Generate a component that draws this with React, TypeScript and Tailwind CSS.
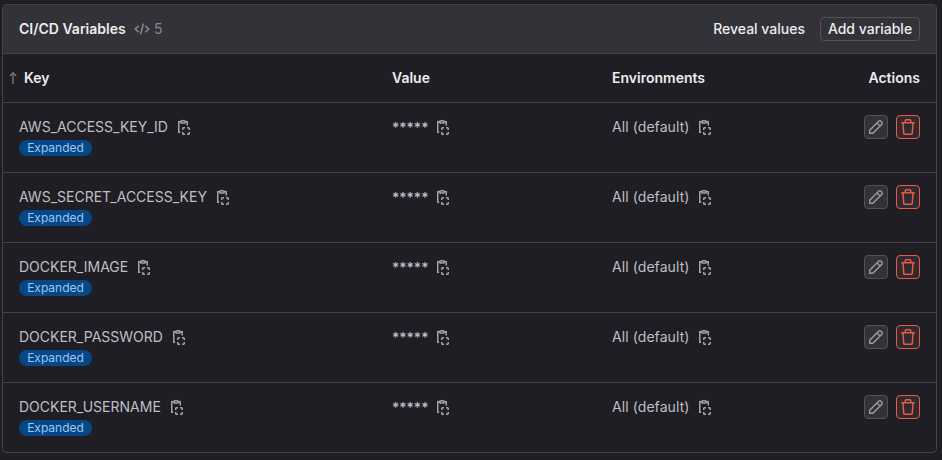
import React from "react";

const variables = [
  { key: "AWS_ACCESS_KEY_ID", keyWidth: "w-[149px]" },
  { key: "AWS_SECRET_ACCESS_KEY", keyWidth: "w-[188px]" },
  { key: "DOCKER_IMAGE", keyWidth: "w-[109px]" },
  { key: "DOCKER_PASSWORD", keyWidth: "w-[144px]" },
  { key: "DOCKER_USERNAME", keyWidth: "w-[142px]" },
];

function CopyIcon() {
  return (
    <svg viewBox="0 0 16 16" className="h-4 w-4 shrink-0" fill="none" stroke="#a4a3a8" strokeWidth="1.5">
      <path d="M4.2 13.25H2.75v-10.5H5M9 2.75h2.25V6.4" />
      <path d="M5 4V2h1.1a1 1 0 0 1 1.8 0H9v2z" strokeWidth="1.3" />
      <path d="M6.75 11V9.5a.75.75 0 0 1 .75-.75H9M11 8.75h1.5a.75.75 0 0 1 .75.75V11M13.25 13v1.5a.75.75 0 0 1-.75.75H11M9 15.25H7.5a.75.75 0 0 1-.75-.75V13" />
    </svg>
  );
}

function PencilIcon() {
  return (
    <svg viewBox="0 0 16 16" className="h-4 w-4" fill="none" stroke="#98979d" strokeWidth="1.5">
      <path d="M1.75 14.25v-3.1l8.9-8.9a1.6 1.6 0 0 1 2.3 0l.8.8a1.6 1.6 0 0 1 0 2.3l-8.9 8.9zM9 4l3 3" />
    </svg>
  );
}

function TrashIcon() {
  return (
    <svg viewBox="0 0 16 16" className="h-4 w-4" fill="none" stroke="#ec5941" strokeWidth="1.5">
      <path d="M1.2 3.75h13.6M5.25 3.5V1.75a1 1 0 0 1 1-1h3.5a1 1 0 0 1 1 1V3.5M3 4l.7 10.2a1 1 0 0 0 1 1h6.6a1 1 0 0 0 1-1L13 4" />
    </svg>
  );
}

export default function App() {
  return (
    <div className="h-[460px] w-[942px] overflow-hidden bg-[#1f1e24] pl-[2px] pt-[4px] font-['Inter',sans-serif] text-[14px] leading-5 text-[#bfbfc3]">
      <section className="w-[935px] overflow-hidden rounded-[4px] border border-[#434248]">
        <header className="flex h-[49px] items-center border-b border-[#434248] bg-[#333238] pl-4 pr-4 text-[#ececef]">
          <h2 className="w-[107px] whitespace-nowrap font-semibold">CI/CD Variables</h2>
          <svg viewBox="0 0 16 16" className="ml-2 h-4 w-4" fill="none" stroke="#89888d" strokeWidth="1.5">
            <path d="M4.7 4.8L1.3 8l3.4 3.2M11.3 4.8L14.7 8l-3.4 3.2M9.4 2.5l-2.8 11" />
          </svg>
          <span className="ml-1 text-[#89888d]">5</span>
          <button className="ml-auto mr-[15px] whitespace-nowrap font-medium">Reveal values</button>
          <button className="h-6 w-[100px] whitespace-nowrap rounded-[4px] border border-[#535158] font-medium leading-[22px]">
            Add variable
          </button>
        </header>
        <div className="flex h-[49px] items-center border-b border-[#434248] pr-4 font-semibold text-[#ececef]">
          <div className="flex w-[389px] items-center pl-[6px]">
            <svg viewBox="0 0 8 14" className="mr-[7px] h-[14px] w-2" fill="none" stroke="#77757c" strokeWidth="1.4">
              <path d="M4 13V2M.8 5L4 1.8 7.2 5" />
            </svg>
            Key
          </div>
          <div className="w-[220px]">Value</div>
          <div>Environments</div>
          <div className="ml-auto">Actions</div>
        </div>
        {variables.map(({ key, keyWidth }) => (
          <div key={key} className="flex h-[70px] border-b border-[#434248] pl-4 pr-4 pt-3 last:h-[69px] last:border-b-0">
            <div className="w-[373px] pt-[2px]">
              <div className="flex h-5 items-center gap-2">
                <span className={"whitespace-nowrap " + keyWidth}>{key}</span>
                <CopyIcon />
              </div>
              <span className="mt-[3px] flex h-4 w-[73px] items-center justify-center rounded-full bg-[#064787] text-[12px] leading-4 text-[#9dc7f1]">
                Expanded
              </span>
            </div>
            <div className="flex h-6 w-[220px] items-center gap-2">
              <span className="w-[35px] pt-px font-medium">*****</span>
              <CopyIcon />
            </div>
            <div className="flex h-6 items-center gap-2">
              <span className="w-[77px] whitespace-nowrap tracking-[0.08px]">All (default)</span>
              <CopyIcon />
            </div>
            <div className="ml-auto flex gap-2">
              <button aria-label="Edit" className="flex h-6 w-6 items-center justify-center rounded-[4px] border border-[#535158] bg-[#333238]">
                <PencilIcon />
              </button>
              <button aria-label="Delete" className="flex h-6 w-6 items-center justify-center rounded-[4px] border border-[#ec5941] bg-[#2d2b31]">
                <TrashIcon />
              </button>
            </div>
          </div>
        ))}
      </section>
    </div>
  );
}
